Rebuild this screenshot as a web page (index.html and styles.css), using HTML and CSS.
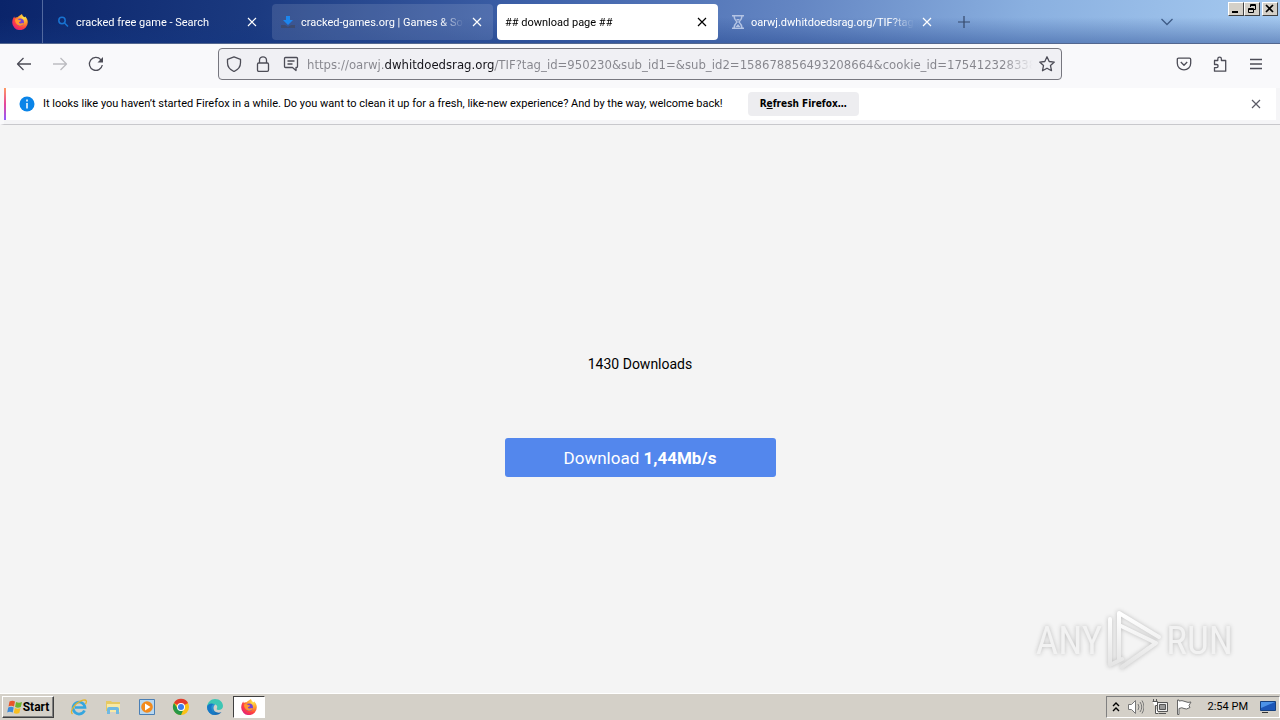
FILE: index.html
```html
<!DOCTYPE html>
<html lang="en">
<head>
<meta charset="utf-8">
<title>## download page ##</title>
<link rel="stylesheet" href="styles.css">
</head>
<body>
<svg class="defs" width="0" height="0" aria-hidden="true">
  <defs>
    <radialGradient id="flame" cx=".75" cy=".2" r=".9"><stop offset="0" stop-color="#ffe64a"/><stop offset=".4" stop-color="#ff9a2a"/><stop offset=".72" stop-color="#ff4040"/><stop offset="1" stop-color="#e0207c"/></radialGradient>
    <linearGradient id="edgeg" x1="0" y1="0" x2="1" y2="1"><stop offset="0" stop-color="#39b6e8"/><stop offset="1" stop-color="#0b57a8"/></linearGradient>
    <linearGradient id="fade" x1="0" y1="0" x2="0" y2="1"><stop offset="0" stop-color="#fff"/><stop offset="1" stop-color="#e4e4e4"/></linearGradient>
    <symbol id="firefox" viewBox="0 0 16 16">
      <path fill="url(#flame)" d="M10 0c.2 1.500 1.200 2.100 2.200 3.200C13 2.900 13.100 2.600 13 2.200c1.500 1.400 2.800 3.600 2.800 6A7.800 7.800 0 0 1 .2 8.400C.2 6 1.200 3.900 2.200 2.500l.6 1.400C3.500 3.200 4.500 3 5.500 3.200 7 1.500 8.500 1.400 10 0z"/>
      <circle cx="8.200" cy="8.300" r="3.700" fill="#7542d4"/>
      <path fill="#ff9830" d="M3 5.500c1.700-1 3-.6 4 .6l1.900.1c.3 1-.8 1.500-1.700 1.900-.6.500.1 1.600 1.300 1.400 1.500-.1 2.500-1 3.400-.4-.8 2.200-3 3.100-5 2.400C4 10.600 3 8 3 5.500z"/>
    </symbol>
    <symbol id="cross" viewBox="0 0 16 16"><path d="M4 4l8 8M12 4l-8 8" fill="none" stroke="currentColor" stroke-width="1.200"/></symbol>
  </defs>
</svg>

<div class="window">
  <header class="tabbar">
    <button class="view" aria-label="Firefox View"><svg class="i16"><use href="#firefox"/></svg></button>
    <nav class="tabs" aria-label="Tabs">
      <div class="tab">
        <svg class="i16" viewBox="0 0 16 16" fill="none" stroke="#1873d1" stroke-width="1.500"><circle cx="7" cy="6.500" r="3.200"/><path d="M9.500 9l3.500 3.500"/></svg>
        <span class="label">cracked free game - Search</span>
        <button class="close" aria-label="Close tab"><svg class="i16"><use href="#cross"/></svg></button>
      </div>
      <div class="tab tinted">
        <svg class="i16" viewBox="0 0 16 16"><path fill="#1c86ee" d="M6 2h4v4h3L8 11 3 6h3z"/><path fill="#3d4b70" d="M1 11h4l3 2 3-2h4v3H1z"/></svg>
        <span class="label">cracked-games.org | Games &amp; Sof</span>
        <button class="close" aria-label="Close tab"><svg class="i16"><use href="#cross"/></svg></button>
      </div>
      <div class="tab active">
        <span class="label">## download page ##</span>
        <button class="close" aria-label="Close tab"><svg class="i16"><use href="#cross"/></svg></button>
      </div>
      <div class="tab">
        <svg class="i16" viewBox="0 0 16 16" fill="none" stroke="#b4c4e4" stroke-width="1.500"><path d="M2 1.800h12M2 14.200h12M4 2c0 3 1 4 3 6-2 2-3 3-3 6M12 2c0 3-1 4-3 6 2 2 3 3 3 6"/><path d="M6 5h4L8 7zM5.500 13L8 10l2.500 3z" fill="#b4c4e4" stroke="none"/></svg>
        <span class="label">oarwj.dwhitdoedsrag.org/TIF?tag_</span>
        <button class="close" aria-label="Close tab"><svg class="i16"><use href="#cross"/></svg></button>
      </div>
    </nav>
    <button class="newtab" aria-label="New tab"><svg class="i16" viewBox="0 0 16 16"><path d="M8 2v12M2 8h12" stroke="currentColor" stroke-width="1.200"/></svg></button>
    <button class="alltabs" aria-label="List all tabs"><svg class="i16" viewBox="0 0 16 16"><path d="M2.500 5l5.500 5.500L13.500 5" fill="none" stroke="currentColor" stroke-width="1.300"/></svg></button>
    <div class="controls">
      <button aria-label="Minimize"><svg width="12" height="10" viewBox="0 0 12 10"><path d="M2 7h6v2H2z"/></svg></button>
      <button aria-label="Restore"><svg width="12" height="10" viewBox="0 0 12 10"><path fill="none" stroke="#000" d="M4.500 3V.500h5v5H7M4 1.500h6M2.500 4.500h5v4h-5zM2 5.500h6"/></svg></button>
      <button class="gap" aria-label="Close"><svg width="12" height="10" viewBox="0 0 12 10"><path d="M2 1l7 7M9 1L2 8" stroke="#000" stroke-width="1.700"/></svg></button>
    </div>
  </header>

  <div class="toolbar">
    <div class="navbtns">
      <button aria-label="Back"><svg class="i16" viewBox="0 0 16 16"><path d="M15 8H1.500M7.500 2l-6 6 6 6"/></svg></button>
      <button aria-label="Forward" disabled><svg class="i16" viewBox="0 0 16 16"><path d="M1 8h13.500M8.500 2l6 6-6 6"/></svg></button>
      <button aria-label="Reload"><svg class="i16" viewBox="0 0 16 16"><path d="M14.300 9A6.500 6.500 0 1 1 12.800 3.600l1.200 1.200"/><path d="M15 1v5.500H9.500z" fill="#4d4d57" stroke="none"/></svg></button>
    </div>
    <div class="urlbar">
      <button aria-label="Tracking protection"><svg class="i16" viewBox="0 0 16 16"><path d="M8 .8l6.500 2.500v3.500c0 4-2.500 7-6.500 8.700C4 13.800 1.500 10.800 1.500 6.800V3.300z"/></svg></button>
      <button aria-label="Site security"><svg class="i16" viewBox="0 0 16 16"><rect x="2.500" y="7" width="11" height="8.300" rx="1.200"/><path d="M4.500 7V4.300a3.500 3.500 0 0 1 7 0V7"/></svg></button>
      <button aria-label="Permissions"><svg class="i16" viewBox="0 0 16 16"><path d="M2.500 1.500h11q1 0 1 1v8q0 1-1 1H13v3l-3.500-3h-7q-1 0-1-1v-8q0-1 1-1zM4.500 5h7M4.500 8h5"/></svg></button>
      <input class="url" type="text" aria-label="Address" value="https://oarwj.dwhitdoedsrag.org/TIF?tag_id=950230&amp;sub_id1=&amp;sub_id2=158678856493208664&amp;cookie_id=17541232833838">
      <button aria-label="Bookmark this page"><svg class="i16" viewBox="0 0 16 16"><path d="M8 .8l2.200 4.700 5.100.6-3.800 3.500 1 5.100L8 12.200l-4.500 2.500 1-5.100L.7 6.100l5.100-.6z"/></svg></button>
    </div>
    <div class="tools">
      <button aria-label="Save to Pocket"><svg class="i16" viewBox="0 0 16 16"><path d="M2.500 2.200h11q1.200 0 1.200 1.200v3.800a6.700 6.700 0 0 1-13.400 0V3.400q0-1.200 1.200-1.200zM4.800 6L8 9.200 11.200 6"/></svg></button>
      <button aria-label="Extensions"><svg class="i16" viewBox="0 0 16 16"><path d="M2 4.500h3.800V3a1.800 1.800 0 0 1 3.600 0v1.500h4.300v10.700H2.500v-3.500h2a1.600 1.600 0 0 0 0-3.200h-2V4.500"/></svg></button>
      <button aria-label="Application menu"><svg class="i16" viewBox="0 0 16 16"><path d="M2 3.500h12M2 8h12M2 12.500h12"/></svg></button>
    </div>
  </div>

  <section class="notice">
    <svg class="i16" viewBox="0 0 16 16"><circle cx="8" cy="8" r="7.500" fill="#0a84e8"/><path d="M8 3.500v2M8 7v5.500" stroke="#fff" stroke-width="1.500"/></svg>
    <p>It looks like you haven’t started Firefox in a while. Do you want to clean it up for a fresh, like-new experience? And by the way, welcome back!</p>
    <button class="refresh">R<u>e</u>fresh Firefox…</button>
    <button class="dismiss" aria-label="Dismiss"><svg class="i16"><use href="#cross"/></svg></button>
  </section>

  <main class="page">
    <p class="count">1430 Downloads</p>
    <button class="download">Download <b>1,44Mb/s</b></button>
    <div class="watermark" aria-hidden="true">
      <span>ANY</span>
      <svg width="60" height="64" viewBox="0 0 60 64" fill="none" stroke="url(#fade)" stroke-width="4" stroke-linecap="round" stroke-linejoin="round"><path d="M15 50V4l40 24M15 16l37 18L18 58M6 10v46l12-6"/></svg>
      <span>RUN</span>
    </div>
  </main>

  <footer class="taskbar">
    <button class="start"><svg class="i16" viewBox="0 0 16 16"><path fill="#e8562a" d="M2.500 2.500q3-1.500 5.500 0L7 7.500q-3-1.500-5.500 0z"/><path fill="#6db52d" d="M9 3q3 1.500 6 0l-1.200 5q-3 1.500-5.700 0z"/><path fill="#3c8ad8" d="M1.200 8.500q3-1.500 5.500 0l-1 5q-3-1.500-5.500 0z"/><path fill="#f7be20" d="M7.800 9q3 1.500 5.700 0l-1.200 5q-3 1.500-5.500 0z"/></svg>Start</button>
    <nav class="apps" aria-label="Quick launch">
      <button aria-label="Internet Explorer"><svg class="i18" viewBox="0 0 18 18" fill="none"><path d="M14.500 12.500A6 6 0 1 1 15 9.500H5" stroke="#35a6df" stroke-width="2.700"/><path d="M2.500 16C-1 13 6 4 13 2.200c4-.9 4 1.500 2.500 4" stroke="#e4b52c" stroke-width="1.300"/></svg></button>
      <button aria-label="Explorer"><svg class="i18" viewBox="0 0 18 18"><path fill="#e6c963" d="M2 3h5l1 1h8v9H2z"/><path fill="#f8e9a5" d="M3 6h13v8H3z"/><path fill="#6fb9e2" d="M3 16v-5q0-2 2-2h8q2 0 2 2v5h-3v-4H6v4z"/></svg></button>
      <button aria-label="Media Player"><svg class="i18" viewBox="0 0 18 18"><path fill="#b8d7f0" stroke="#4a7fb5" d="M1.500 1.500h15v15h-15z"/><circle cx="9" cy="9" r="5.800" fill="#f28a1c"/><path fill="#fff" d="M7 5.500v7L12.500 9z"/></svg></button>
      <button aria-label="Chrome"><svg class="i18" viewBox="0 0 18 18"><circle cx="9" cy="9" r="8" fill="#fbc116"/><path fill="#e33b2e" d="M9 9L2 5a8 8 0 0 1 14 0z"/><path fill="#279847" d="M9 17A8 8 0 0 1 2 5l4 6 5 1.500z"/><circle cx="9" cy="9" r="4" fill="#fff"/><circle cx="9" cy="9" r="3" fill="#3b7ded"/></svg></button>
      <button aria-label="Edge"><svg class="i18" viewBox="0 0 18 18"><path fill="url(#edgeg)" d="M1 9a8 8 0 0 0 8 8c3 0 5-1 6.500-3-3 1.500-8 .5-8-4 0-2 1-3 2-3.500C5 4 1 6 1 9z"/><path fill="#3dc6b4" d="M1 9C1.500 4 5 1 9 1c5 0 8 3.500 8 7 0 2.500-2 4-4.500 4-2 0-2-1-1.500-2 1-2-1-4-4-4S1.500 7 1 9z"/><path fill="#1678c5" d="M1 9c.5-3 4-4.500 7-3-2 .7-3 2.500-2.500 5 .3 2 1.500 4 3.500 6a8 8 0 0 1-8-8z"/></svg></button>
      <button class="pressed" aria-label="Firefox"><svg class="i16"><use href="#firefox"/></svg></button>
    </nav>
    <div class="tray">
      <svg width="8" height="12" viewBox="0 0 8 12" fill="none" stroke="#000" stroke-width="1.400"><path d="M1 5l3-3 3 3M1 10l3-3 3 3"/></svg>
      <svg class="i16" viewBox="0 0 16 16" fill="#fff" stroke="#777"><path d="M.5 5.500h3l4-4v13l-4-4h-3z"/><path fill="none" d="M10 5q2 3 0 6M12 3q3.500 5 0 10M14 1.500q4 6.500 0 13"/></svg>
      <svg class="i16" viewBox="0 0 16 16" fill="#eee" stroke="#555"><path d="M5.500 3.500h10v9h-10zM7 14.500h7"/><path fill="#999" d="M7.500 5.500h6v5h-6z"/><path fill="#fff" d="M.5 2.500h5v4h-2v8h3M1.500 0v2M4.500 0v2"/></svg>
      <svg class="i16" viewBox="0 0 16 16" fill="#fff" stroke="#666"><path d="M1.500 1v14.500h1.500V9.500q3-1.500 5 0t6-1l-1-2 2-3.500q-3 1-6-.5T3 2V1z"/></svg>
      <time>2:54 PM</time>
      <svg class="i16" viewBox="0 0 16 16"><path fill="#1c56b8" stroke="#16407f" d="M.5 2.500h15v9H.5z"/><path fill="#4c92e8" d="M1 3h14L1 9z"/><path fill="#333" d="M2 13h6v1H2z"/></svg>
    </div>
  </footer>
</div>
</body>
</html>
```

FILE: styles.css
```css
* { box-sizing: border-box; }
body { margin: 0; font: 11px/14px Roboto, sans-serif; color: #000; }
button { font: inherit; color: inherit; background: none; border: 0; padding: 0; margin: 0; }
button, .tray { display: flex; align-items: center; justify-content: center; }
p { margin: 0; }
svg { flex: none; display: block; }
.defs { position: absolute; }
.i16 { width: 16px; height: 16px; }
.i18 { width: 18px; height: 18px; }
.window { min-height: 100vh; display: flex; flex-direction: column; }

.tabbar {
  display: flex; align-items: stretch; height: 44px; color: #fff;
  background: linear-gradient(to bottom, transparent 40%, rgba(20, 55, 130, .4)), linear-gradient(100deg, #0a246a 0, #1b3a80 20%, #3f62aa 42%, #6486c3 62%, #8ab0e0 80%, #a6caf0 100%);
  border-bottom: 1px solid #53678f;
}
.view { width: 43px; padding-right: 2px; border-right: 1px solid #52699f; }
.tabs { display: flex; flex: 0 1 900px; gap: 4px; padding: 4px 0 3px 4px; min-width: 0; }
.tab { flex: 1 1 0; min-width: 0; display: flex; align-items: center; gap: 5px; padding: 0 8px; border-radius: 4px; }
.tinted { background: rgba(255, 255, 255, .12); }
.active { background: #fff; color: #000; }
.label { flex: 1; min-width: 0; padding-top: 2px; overflow: hidden; white-space: nowrap; mask-image: linear-gradient(to left, transparent, #000 24px); }
.close { width: 16px; }
.newtab { width: 42px; color: #35496b; }
.alltabs { width: 36px; margin-left: auto; color: #3e5b86; }
.controls { display: flex; padding: 2px 2px 0 0; margin-left: 43px; align-items: flex-start; }
.controls button { width: 16px; height: 14px; background: #d4d0c8; border: 1px solid; border-color: #fff #404040 #404040 #fff; }
.controls .gap { margin-left: 2px; }

.toolbar { display: flex; align-items: center; justify-content: space-between; height: 44px; padding: 0 8px 4px; background: #f9f9fb; }
.toolbar button { width: 32px; height: 32px; }
.toolbar svg { fill: none; stroke: #4d4d57; stroke-width: 1.3; stroke-linejoin: round; }
.toolbar button:disabled { opacity: .35; }
.navbtns, .tools { display: flex; gap: 4px; flex: 0 1 210px; }
.tools { justify-content: flex-end; }
.urlbar { flex: 1; min-width: 0; display: flex; align-items: center; height: 32px; border: 1px solid #77777f; border-radius: 4px; background: #f0f0f4; }
.urlbar button { width: 28px; flex: none; }
.urlbar button:first-child { width: 30px; }
.url {
  flex: 1; min-width: 0; height: 28px; border: 0; padding: 0; margin-left: 2px; outline: 0;
  font: 13px/20px "DejaVu Sans Condensed", "DejaVu Sans", sans-serif;
  color: transparent;
  background: linear-gradient(to right, #85858c 78px, #15141a 78px 188px, #85858c 188px calc(100% - 30px), #f0f0f4);
  background-clip: text;
}

.notice { display: flex; align-items: center; min-height: 37px; padding: 0 16px 4px 15px; background: #fff; border-bottom: 1px solid #c8c8cc; border-left: 4px solid #f9f9fb; box-shadow: inset -4px -4px #f5f5f7; position: relative; }
.notice::before { content: ""; position: absolute; left: 0; top: 0; bottom: 4px; width: 2px; background: linear-gradient(#ff9a62, #e6459a 50%, #9059ff); }
.notice p { margin: 0 25px 0 8px; }
.refresh { height: 24px; padding: 0 12px; border-radius: 4px; background: #ededf0; font: 700 10px/14px "DejaVu Sans Condensed", "DejaVu Sans", sans-serif; white-space: pre; }
.dismiss { margin-left: auto; color: #5b5b66; }

.page { flex: 1; position: relative; display: flex; flex-direction: column; align-items: center; padding-top: 229px; background: #f4f4f4; }
.count { font-size: 14px; line-height: 20px; }
.download { width: 271px; height: 39px; margin-top: 64px; border-radius: 3px; background: #5387ed; color: #fff; font-size: 17px; white-space: pre; }
.watermark { position: absolute; right: 47px; bottom: 20px; display: flex; align-items: center; gap: 2px; color: #f2f2f2; font: 39px/64px "Roboto Condensed", "Liberation Sans Narrow", Roboto, sans-serif; filter: drop-shadow(0 0 2px #bbb); }

.taskbar { display: flex; align-items: center; height: 27px; padding: 1px 0 2px 2px; background: #d4d0c8; border-top: 1px solid #fff; color: #000; }
.start { width: 52px; height: 22px; font-size: 12px; font-weight: 700; border: 1px solid; border-color: #fff #404040 #404040 #fff; box-shadow: inset -1px -1px #808080; }
.apps { display: flex; gap: 2px; margin-left: 9px; }
.apps button { width: 32px; height: 22px; }
.apps .pressed { background: #fff; border: 1px solid; border-color: #404040 #fff #fff #404040; }
.tray { margin-left: auto; height: 22px; padding: 0 3px 0 5px; gap: 8px; border: 1px solid; border-color: #808080 #fff #fff #808080; }
.tray time { margin: 0 4px 0 8px; }
```
